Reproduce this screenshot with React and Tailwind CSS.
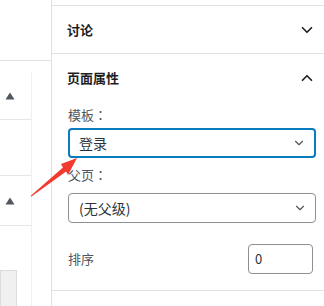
import React from "react";
import { ChevronDown, ChevronUp } from "lucide-react";

const font = {
  fontFamily: '"Noto Sans CJK SC", "Noto Sans", sans-serif',
};

const Tri = () => (
  <svg width="10" height="8" viewBox="0 0 10 8">
    <polygon points="5,0.5 9.5,7.5 0.5,7.5" fill="#50575e" />
  </svg>
);

const Colon = () => (
  <span className="font-['Noto_Sans_CJK_JP',sans-serif]">：</span>
);

const SelectBox = ({ value, focused }) => (
  <div
    className={
      "flex h-[30px] w-[248px] items-center justify-between rounded-[4px] bg-white pl-[9px] pr-[8px] text-[14px] text-[#2c3338] " +
      (focused ? "border-2 border-[#0a7bbd]" : "border border-[#8c8f94] pl-[10px]")
    }
  >
    <span>{value}</span>
    <ChevronDown size={14} strokeWidth={2} color="#50575e" />
  </div>
);

export default function App() {
  return (
    <div
      className="relative flex h-[306px] w-[324px] overflow-hidden bg-white text-[#1e1e1e]"
      style={font}
    >
      {/* left column */}
      <div className="w-[52px] shrink-0 border-r border-[#e0e0e0]">
        <div className="h-[61px] border-b border-[#e0e0e0]" />
        <div className="mt-[11px] w-[32px] border-r border-[#f0f0f0]">
          <div className="flex h-[48px] items-center border-b border-[#e6e6e6] pl-[5px]">
            <Tri />
          </div>
          <div className="h-[56px] border-b border-[#e6e6e6]" />
          <div className="flex h-[50px] items-center border-b border-[#e6e6e6] pl-[5px]">
            <Tri />
          </div>
          <div className="h-[44px]" />
          <div className="h-[40px] w-[17px] border border-[#dcdcde] bg-[#f0f0f1]" />
        </div>
      </div>

      {/* right sidebar */}
      <div className="w-[272px] shrink-0">
        <div className="h-[5px]" />
        <div className="border-y border-[#e0e0e0]">
          <div className="flex h-[47px] items-center justify-between pl-[15px] pr-[8px]">
            <span className="text-[13px] font-bold">讨论</span>
            <ChevronDown size={18} strokeWidth={2.2} color="#1e1e1e" />
          </div>
        </div>
        <div className="border-b border-[#e0e0e0] pb-[16px]">
          <div className="flex h-[48px] items-center justify-between pl-[15px] pr-[8px]">
            <span className="text-[13px] font-bold">页面属性</span>
            <ChevronUp size={18} strokeWidth={2.2} color="#1e1e1e" />
          </div>
          <div className="pl-[16px]">
            <div className="mt-[4px] h-[18px] text-[13px] leading-[18px] text-[#50575e]">
              模板<Colon />
            </div>
            <div className="mt-[4px]">
              <SelectBox value="登录" focused />
            </div>
            <div className="mt-[8px] h-[18px] text-[13px] leading-[18px] text-[#50575e]">
              父页<Colon />
            </div>
            <div className="mt-[9px]">
              <SelectBox value="(无父级)" />
            </div>
            <div className="mt-[21px] flex items-center justify-between pr-[11px]">
              <span className="text-[13px] text-[#50575e]">排序</span>
              <div className="flex h-[30px] w-[65px] items-center rounded-[4px] border border-[#8c8f94] pl-[6px] text-[13px] text-[#2c3338]">
                0
              </div>
            </div>
          </div>
        </div>
      </div>

      {/* red annotation arrow */}
      <svg
        className="pointer-events-none absolute left-0 top-0"
        width="324"
        height="306"
        viewBox="0 0 324 306"
      >
        <polygon
          points="30.5,196 62.9,167.5 61,164 77,158 68,175 66.1,171.4 31.5,196.5"
          fill="#f23b2f"
        />
      </svg>
    </div>
  );
}
